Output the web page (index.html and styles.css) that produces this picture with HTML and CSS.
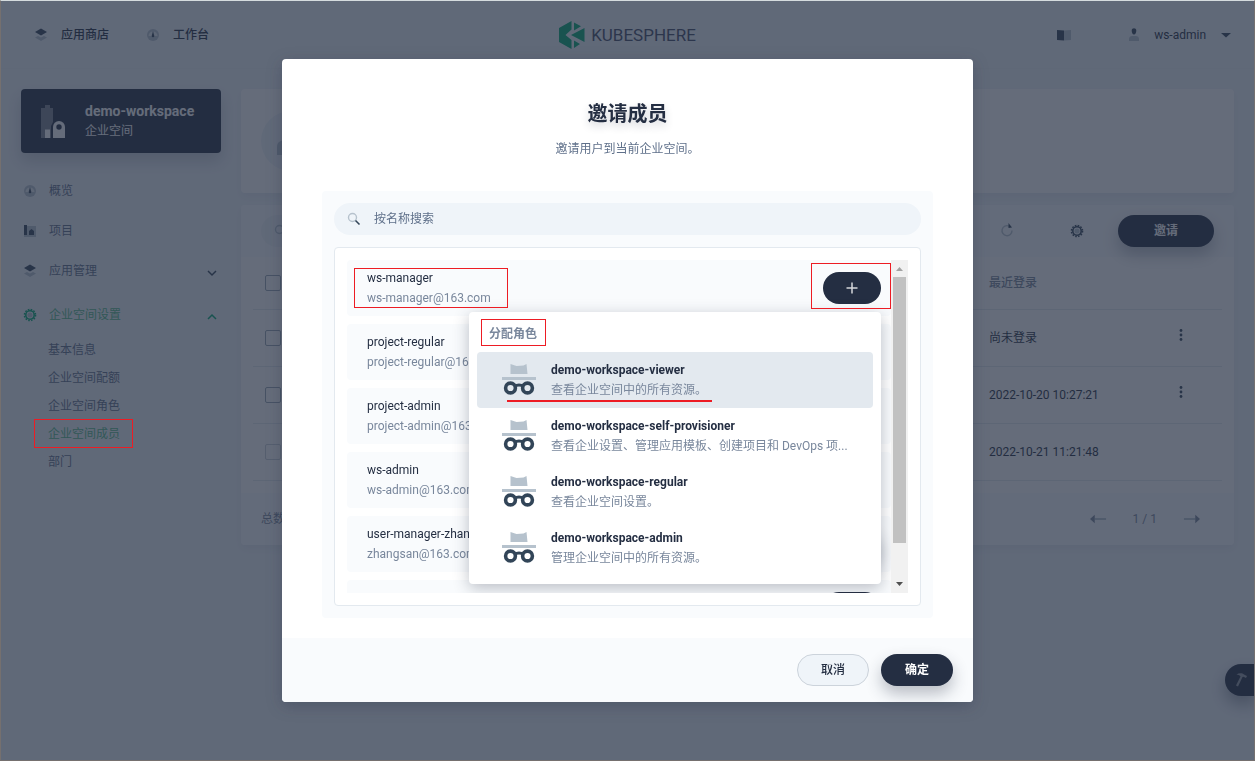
FILE: index.html
```html
<!DOCTYPE html>
<html lang="zh-CN">
<head>
  <meta charset="UTF-8">
  <title>KubeSphere</title>
  <meta name="viewport" content="width=device-width, initial-scale=1.0">
  <link rel="stylesheet" href="styles.css">
</head>
<body>
  <!-- Shared icons -->
  <svg class="sprite" aria-hidden="true">
    <symbol id="i-layers" viewBox="0 0 16 16">
      <path class="light" d="M2 10.500 5 9l3 1.600L11 9l3 1.500L8 14z"/>
      <path class="dark" d="M8 1.500l6 3.500L8 8.500 2 5z"/>
    </symbol>
    <symbol id="i-dash" viewBox="0 0 16 16">
      <circle class="light" cx="8" cy="8" r="6"/>
      <path class="pale" d="M3.500 9a4.500 4.500 0 1 1 9 0z"/>
      <path class="dark" d="M8 4l1.300 5a1.300 1.300 0 1 1-2.600 0z"/>
    </symbol>
    <symbol id="i-project" viewBox="0 0 16 16">
      <path class="light" d="M5 3h9v11H2v-2h3z"/>
      <path class="dark" d="M2 2h3v10H2zM7 8l2.500-2L12 8v4H7z"/>
    </symbol>
    <symbol id="i-gear" viewBox="0 0 16 16">
      <circle class="light" cx="8" cy="8" r="2.600"/>
      <circle class="ring" cx="8" cy="8" r="4.200"/>
      <circle class="teeth" cx="8" cy="8" r="5.500"/>
    </symbol>
    <symbol id="i-search" viewBox="0 0 16 16">
      <circle cx="6.500" cy="6.500" r="4" fill="none" stroke="#b6c2cd" stroke-width="1.400"/>
      <path d="M9.500 9.500l4 4" stroke="#324558" stroke-width="1.600"/>
    </symbol>
    <symbol id="i-plus" viewBox="0 0 16 16">
      <path d="M8 2.500v11M2.500 8h11" stroke="#fff" stroke-width="1.500" opacity=".8"/>
    </symbol>
    <symbol id="i-down" viewBox="0 0 16 16">
      <path d="M4 8l4 4 4-4" fill="none" stroke="currentColor" stroke-width="1.500"/>
    </symbol>
    <symbol id="i-up" viewBox="0 0 16 16">
      <path d="M4 12l4-4 4 4" fill="none" stroke="currentColor" stroke-width="1.500"/>
    </symbol>
    <symbol id="i-more" viewBox="0 0 16 16">
      <circle class="dark" cx="8" cy="3.500" r="1.400"/>
      <circle class="dark" cx="8" cy="8" r="1.400"/>
      <circle class="dark" cx="8" cy="12.500" r="1.400"/>
    </symbol>
    <symbol id="i-role" viewBox="0 0 40 40">
      <path d="M11.500 4l6 2 7-.5L27.500 4l1 10h-17zM3 17h34v3H3z" fill="#b6c2cd"/>
      <circle cx="11.500" cy="28" r="4.900" fill="none" stroke="#324558" stroke-width="3.600"/>
      <circle cx="28.500" cy="28" r="4.900" fill="none" stroke="#324558" stroke-width="3.600"/>
      <path d="M15.500 26.500c2.500-2 6.500-2 9 0" fill="none" stroke="#324558" stroke-width="3"/>
    </symbol>
  </svg>

  <div class="page">
    <header class="header">
      <nav class="header-nav">
        <a href="#"><svg class="icon"><use href="#i-layers"/></svg>应用商店</a>
        <a href="#"><svg class="icon"><use href="#i-dash"/></svg>工作台</a>
      </nav>
      <a href="#" class="logo">
        <svg width="26" height="28" viewBox="0 0 26 28">
          <path d="M0 7L12.500 0v8.500L6.500 14l6 5v9L0 21z"/>
          <path d="M15 1.500l7 3.800-7 4.200zM25.500 7v14L12 14zM15 19.500l6 3.500-6 4z"/>
        </svg>
        KUBESPHERE
      </a>
      <div class="header-user">
        <button type="button" class="plain" aria-label="文档">
          <svg class="icon" viewBox="0 0 16 16"><path class="dark" d="M1 3l7 .5v10L1 13z"/><path class="light" d="M8 3.500L15 3v10l-7 .5z"/></svg>
        </button>
        <button type="button" class="plain account">
          <svg class="icon" viewBox="0 0 16 16"><path class="light" d="M3 14v-2c0-2 1.500-3 3-3h4c1.500 0 3 1 3 3v2z"/><path class="dark" d="M5.700 3.500c0-3 4.600-3 4.600 0 0 2-.8 4-2.300 4s-2.300-2-2.300-4z"/></svg>
          ws-admin
          <svg class="icon" viewBox="0 0 16 16"><path class="dark" d="M3 6h10l-5 4.500z"/></svg>
        </button>
      </div>
    </header>

    <div class="main">
      <aside class="sidebar">
        <button type="button" class="workspace">
          <svg width="40" height="40" viewBox="0 0 40 40">
            <path fill="#fff" opacity=".4" d="M8 7h4V4h5v3h3v14l-2 4v12H8z"/>
            <path fill="#fff" d="M12 28.500h5V37h-5z"/>
            <path fill="#fff" d="M20 37V26a6 6 0 0 1 12 0v11z"/>
            <circle cx="26" cy="26" r="2.700" fill="#242e42"/>
          </svg>
          <span class="workspace-text">
            <strong>demo-workspace</strong>
            <span>企业空间</span>
          </span>
        </button>
        <ul class="menu">
          <li><a href="#"><svg class="icon"><use href="#i-dash"/></svg>概览</a></li>
          <li><a href="#"><svg class="icon"><use href="#i-project"/></svg>项目</a></li>
          <li><a href="#"><svg class="icon"><use href="#i-layers"/></svg>应用管理<svg class="icon arrow"><use href="#i-down"/></svg></a></li>
          <li class="open">
            <a href="#"><svg class="icon"><use href="#i-gear"/></svg>企业空间设置<svg class="icon arrow"><use href="#i-up"/></svg></a>
            <ul class="submenu">
              <li><a href="#">基本信息</a></li>
              <li><a href="#">企业空间配额</a></li>
              <li><a href="#">企业空间角色</a></li>
              <li><a href="#" class="active">企业空间成员<span class="mark mark-menu"></span></a></li>
              <li><a href="#">部门</a></li>
            </ul>
          </li>
        </ul>
      </aside>

      <main class="content">
        <section class="banner">
          <div class="banner-icon">
            <svg width="28" height="28" viewBox="0 0 28 28"><path fill="#b6c2cd" d="M0 32V20c0-5 4-7 8-7h12c4 0 8 2 8 7v8H0z"/></svg>
          </div>
        </section>
        <section class="panel">
          <div class="toolbar">
            <div class="toolbar-search">
              <svg class="icon"><use href="#i-search"/></svg>
              <input type="search" aria-label="搜索成员">
            </div>
            <button type="button" class="plain tool" aria-label="刷新">
              <svg class="icon" viewBox="0 0 16 16"><path d="M10 3.100a5 5 0 1 0 3 4.500" fill="none" stroke="#b6c2cd" stroke-width="1.400"/><path class="dark" d="M9.500 0v5l3.500-.5z"/></svg>
            </button>
            <button type="button" class="plain tool" aria-label="设置">
              <svg class="icon"><use href="#i-gear"/></svg>
            </button>
            <button type="button" class="btn btn-dark btn-wide">邀请</button>
          </div>
          <div class="table-wrap">
            <table>
              <thead>
                <tr>
                  <th class="col-check"><input type="checkbox" aria-label="全选"></th>
                  <th></th>
                  <th class="col-login">最近登录</th>
                  <th class="col-more"></th>
                </tr>
              </thead>
              <tbody>
                <tr>
                  <td><input type="checkbox" aria-label="选择"></td>
                  <td></td>
                  <td>尚未登录</td>
                  <td class="col-more"><button type="button" class="plain" aria-label="更多"><svg class="icon"><use href="#i-more"/></svg></button></td>
                </tr>
                <tr>
                  <td><input type="checkbox" aria-label="选择"></td>
                  <td></td>
                  <td>2022-10-20 10:27:21</td>
                  <td class="col-more"><button type="button" class="plain" aria-label="更多"><svg class="icon"><use href="#i-more"/></svg></button></td>
                </tr>
                <tr>
                  <td><input type="checkbox" aria-label="选择" disabled></td>
                  <td></td>
                  <td>2022-10-21 11:21:48</td>
                  <td class="col-more"></td>
                </tr>
              </tbody>
            </table>
          </div>
          <div class="panel-footer">
            <span>总数</span>
            <div class="pager">
              <button type="button" class="plain" aria-label="上一页"><svg class="page-arrow" viewBox="0 0 18 10"><path d="M5 5h12" stroke="#b6c2cd" stroke-width="2"/><path fill="#79879c" d="M0 5l5-4.500v9z"/></svg></button>
              <span>1 / 1</span>
              <button type="button" class="plain" aria-label="下一页"><svg class="page-arrow" viewBox="0 0 18 10"><path d="M1 5h12" stroke="#b6c2cd" stroke-width="2"/><path fill="#79879c" d="M18 5l-5-4.500v9z"/></svg></button>
            </div>
          </div>
        </section>
      </main>
    </div>

    <button type="button" class="toolbox" aria-label="工具箱">
      <svg class="icon" viewBox="0 0 16 16"><path fill="#fff" opacity=".5" d="M3.500 2.500C6 .8 9.500 1 11 2.500l3 1.500-1 2-2.500-1.200-1 .2L5 14.500l-2-1L7.500 4.500C6.500 3 5 2.800 3.500 2.500z"/></svg>
    </button>
  </div>

  <div class="overlay">
    <div class="modal" role="dialog" aria-labelledby="modal-title">
      <div class="modal-body">
        <h2 id="modal-title">邀请成员</h2>
        <p class="modal-desc">邀请用户到当前企业空间。</p>
        <div class="picker">
          <div class="search">
            <svg class="icon"><use href="#i-search"/></svg>
            <input type="search" placeholder="按名称搜索" aria-label="按名称搜索">
          </div>
          <div class="list-box">
            <ul class="users">
              <li class="user">
                <div class="user-info">
                  <strong>ws-manager</strong>
                  <span>ws-manager@163.com</span>
                  <span class="mark mark-user"></span>
                </div>
                <div class="user-add">
                  <button type="button" class="btn btn-add" aria-label="添加 ws-manager"><svg class="icon"><use href="#i-plus"/></svg></button>
                  <span class="mark mark-add"></span>
                  <div class="roles">
                    <div class="roles-title">分配角色<span class="mark mark-title"></span></div>
                    <button type="button" class="role selected">
                      <svg class="role-icon"><use href="#i-role"/></svg>
                      <span class="role-text"><strong>demo-workspace-viewer</strong><span>查看企业空间中的所有资源。</span></span>
                      <span class="underline"></span>
                    </button>
                    <button type="button" class="role">
                      <svg class="role-icon"><use href="#i-role"/></svg>
                      <span class="role-text"><strong>demo-workspace-self-provisioner</strong><span>查看企业设置、管理应用模板、创建项目和 DevOps 项...</span></span>
                    </button>
                    <button type="button" class="role">
                      <svg class="role-icon"><use href="#i-role"/></svg>
                      <span class="role-text"><strong>demo-workspace-regular</strong><span>查看企业空间设置。</span></span>
                    </button>
                    <button type="button" class="role">
                      <svg class="role-icon"><use href="#i-role"/></svg>
                      <span class="role-text"><strong>demo-workspace-admin</strong><span>管理企业空间中的所有资源。</span></span>
                    </button>
                  </div>
                </div>
              </li>
              <li class="user">
                <div class="user-info"><strong>project-regular</strong><span>project-regular@163.com</span></div>
                <button type="button" class="btn btn-add" aria-label="添加 project-regular"></button>
              </li>
              <li class="user">
                <div class="user-info"><strong>project-admin</strong><span>project-admin@163.com</span></div>
                <button type="button" class="btn btn-add" aria-label="添加 project-admin"></button>
              </li>
              <li class="user">
                <div class="user-info"><strong>ws-admin</strong><span>ws-admin@163.com</span></div>
                <button type="button" class="btn btn-add" aria-label="添加 ws-admin"></button>
              </li>
              <li class="user">
                <div class="user-info"><strong>user-manager-zhangsan</strong><span>zhangsan@163.com</span></div>
                <button type="button" class="btn btn-dark btn-add" aria-label="添加 user-manager-zhangsan"></button>
              </li>
              <li class="user">
                <div class="user-info"></div>
                <button type="button" class="btn btn-add" aria-label="添加"></button>
              </li>
            </ul>
            <div class="scrollbar">
              <svg width="17" height="17" viewBox="0 0 17 17"><path fill="#a3a3a3" d="M5 11h7L8.500 7z"/></svg>
              <div class="track"><div class="thumb"></div></div>
              <svg width="17" height="17" viewBox="0 0 17 17"><path fill="#505050" d="M5 6h7l-3.500 4z"/></svg>
            </div>
          </div>
        </div>
      </div>
      <div class="modal-footer">
        <button type="button" class="btn btn-light">取消</button>
        <button type="button" class="btn btn-dark">确定</button>
      </div>
    </div>
  </div>
</body>
</html>
```
FILE: styles.css
```css
* {
  box-sizing: border-box;
}
body {
  margin: 0;
  height: 100vh;
  overflow: hidden;
  background-color: #eff4f9;
  color: #242e42;
  font-family: Roboto, "Noto Sans CJK SC", sans-serif;
  font-size: 12px;
  line-height: 20px;
}
a {
  color: inherit;
  text-decoration: none;
}
ul {
  list-style: none;
  margin: 0;
  padding: 0;
}
button,
input {
  font: inherit;
  color: inherit;
}
.plain {
  border: 0;
  padding: 0;
  background: none;
  cursor: pointer;
}
.sprite {
  position: absolute;
  width: 0;
  height: 0;
}
.icon {
  display: block;
  flex: none;
  width: 16px;
  height: 16px;
}
.dark {
  fill: #324558;
}
.light {
  fill: #b6c2cd;
}
.pale {
  fill: #e3e9ef;
}
.ring,
.teeth {
  fill: none;
  stroke: var(--gear, #324558);
  stroke-width: 1.6;
}
.teeth {
  stroke-dasharray: 1.6 1.28;
}

/* header */
.header {
  display: flex;
  align-items: center;
  height: 69px;
  padding: 1px 21px 0;
  border-bottom: 1px solid #ebf0f5;
}
.header-nav,
.header-user {
  display: flex;
  flex: 1;
}
.header-nav {
  gap: 36px;
}
.header-nav a {
  display: flex;
  align-items: center;
  gap: 12px;
  font-weight: 500;
}
.header-nav a:first-child {
  margin-left: 12px;
}
.logo {
  display: flex;
  align-items: center;
  gap: 6px;
  color: #424a66;
  font-size: 17px;
}
.logo svg {
  fill: #00aa72;
}
.header-user {
  justify-content: flex-end;
  gap: 54px;
}
.account {
  display: flex;
  align-items: center;
  gap: 12px;
}

/* sidebar */
.main {
  display: flex;
  gap: 20px;
  padding: 20px 21px;
}
.sidebar {
  flex: none;
  width: 200px;
}
.workspace {
  display: flex;
  align-items: center;
  gap: 12px;
  width: 100%;
  height: 64px;
  padding: 0 12px;
  border: 0;
  border-radius: 4px;
  background-color: #242e42;
  box-shadow: 0 8px 16px rgba(36, 46, 66, 0.2);
  color: #fff;
  text-align: left;
}
.workspace-text strong,
.workspace-text span {
  display: block;
}
.workspace-text strong {
  font-size: 14px;
}
.menu {
  padding-top: 18px;
  color: #5f708a;
}
.menu > li > a {
  display: flex;
  align-items: center;
  gap: 11px;
  height: 40px;
  padding: 0 1px;
}
.menu > .open {
  padding-top: 4px;
}
.menu > .open > a {
  color: #55bc8a;
}
.open .icon {
  --gear: #00aa72;
  color: #00aa72;
}
.arrow {
  margin-left: auto;
  color: #324558;
}
.submenu a {
  display: inline-block;
  position: relative;
  height: 28px;
  padding: 5px 0 0 27px;
}
.submenu .active {
  color: #55bc8a;
}

/* content */
.content {
  flex: 1;
  min-width: 0;
}
.banner,
.panel {
  border-radius: 4px;
  background-color: #fff;
  box-shadow: 0 4px 8px rgba(36, 46, 66, 0.06);
}
.banner {
  height: 104px;
  margin-bottom: 12px;
  padding: 22px 20px;
}
.banner-icon {
  display: flex;
  align-items: center;
  justify-content: center;
  width: 60px;
  height: 60px;
  border-radius: 50%;
  background-color: #eff4f9;
}
.toolbar {
  display: flex;
  align-items: center;
  gap: 12px;
  height: 52px;
  padding: 0 20px;
  border-radius: 4px 4px 0 0;
  background-color: #f9fbfd;
}
.toolbar-search,
.search {
  display: flex;
  align-items: center;
  gap: 12px;
  height: 32px;
  padding: 0 12px;
  border-radius: 16px;
  background-color: #eff4f9;
}
.toolbar-search {
  flex: 1;
}
.toolbar-search input,
.search input {
  flex: 1;
  min-width: 0;
  border: 0;
  padding: 0;
  background: none;
  outline: none;
}
.tool {
  display: flex;
  justify-content: center;
  width: 58px;
}
.table-wrap {
  padding: 0 12px 12px;
}
table {
  width: 100%;
  border-collapse: collapse;
  table-layout: fixed;
}
th,
td {
  height: 57px;
  padding: 0 12px;
  border-bottom: 1px solid #e3e9ef;
  text-align: left;
}
th {
  height: 52px;
  color: #79879c;
  font-weight: 500;
}
.col-check {
  width: 60px;
}
.col-login {
  width: 163px;
}
.col-more {
  width: 82px;
}
.col-more .icon {
  margin: 0 21px;
}
input[type="checkbox"] {
  display: block;
  appearance: none;
  width: 16px;
  height: 16px;
  margin: 0;
  border: 1px solid #9aa7b6;
  border-radius: 2px;
}
input[type="checkbox"]:disabled {
  opacity: 0.5;
}
.panel-footer {
  display: flex;
  align-items: center;
  justify-content: space-between;
  height: 52px;
  padding: 0 34px 0 20px;
  border-radius: 0 0 4px 4px;
  background-color: #f9fbfd;
  color: #79879c;
}
.pager {
  display: flex;
  align-items: center;
  gap: 26px;
}
.page-arrow {
  display: block;
  width: 17px;
  height: 10px;
}
.toolbox {
  position: fixed;
  right: 0;
  bottom: 65px;
  width: 30px;
  height: 32px;
  padding: 0 8px;
  border: 0;
  border-radius: 16px 0 0 16px;
  background-color: #242e42;
  box-shadow: 0 8px 16px rgba(36, 46, 66, 0.4);
}

/* buttons */
.btn {
  display: flex;
  align-items: center;
  justify-content: center;
  width: 72px;
  height: 32px;
  padding: 0;
  border: 0;
  border-radius: 16px;
  background-color: #242e42;
  color: #fff;
  font-weight: 700;
  cursor: pointer;
}
.btn-dark {
  box-shadow: 0 8px 16px rgba(36, 46, 66, 0.3);
}
.btn-light {
  border: 1px solid #ccd3db;
  background-color: #eff4f9;
  color: #242e42;
  font-weight: 500;
}
.btn-wide {
  width: 96px;
}
.btn-add {
  width: 58px;
}

/* modal */
.overlay {
  display: flex;
  align-items: center;
  justify-content: center;
  position: fixed;
  inset: 0;
  z-index: 10;
  border: 1px solid #75706f;
  border-top-color: #d5dcde;
  background-color: rgba(35, 45, 65, 0.7);
}
.modal {
  width: 691px;
  max-width: 100%;
  border-radius: 4px;
  background-color: #fff;
  box-shadow: 0 4px 16px rgba(36, 46, 66, 0.3);
}
.modal-body {
  padding: 41px 40px 20px;
}
.modal-body h2 {
  margin: 0 0 11px;
  font-size: 20px;
  line-height: 28px;
  text-align: center;
  text-shadow: 0 4px 8px rgba(36, 46, 66, 0.2);
}
.modal-desc {
  margin: 0 0 32px;
  color: #5f708a;
  text-align: center;
}
.picker {
  padding: 12px;
  border-radius: 4px;
  background-color: #f9fbfd;
}
.search input::placeholder {
  color: #5f708a;
}
.list-box {
  display: flex;
  height: 359px;
  margin-top: 12px;
  padding: 12px;
  border: 1px solid #e3e9ef;
  border-radius: 4px;
  background-color: #fff;
}
.users {
  flex: 1;
  overflow: hidden;
}
.user {
  display: flex;
  align-items: center;
  justify-content: space-between;
  height: 56px;
  margin-bottom: 8px;
  padding: 0 10px 0 20px;
  border-radius: 4px;
  background-color: #f9fbfd;
}
.user-info {
  position: relative;
}
.user-info strong,
.user-info span {
  display: block;
  font-weight: 400;
}
.user-info span {
  color: #79879c;
}
.user-add {
  position: relative;
}
.scrollbar {
  display: flex;
  flex-direction: column;
  flex: none;
  width: 17px;
  background-color: #f1f1f1;
}
.track {
  flex: 1;
  padding: 0 2px;
}
.thumb {
  height: 89%;
  background-color: #c1c1c1;
}

/* role menu */
.roles {
  position: absolute;
  top: 40px;
  right: 0;
  z-index: 1;
  width: 412px;
  padding: 8px;
  border-radius: 4px;
  background-color: #fff;
  box-shadow: 0 4px 16px rgba(36, 46, 66, 0.3);
}
.roles-title {
  position: relative;
  height: 32px;
  padding: 4px 12px;
  color: #79879c;
  font-weight: 700;
}
.role {
  display: flex;
  align-items: center;
  gap: 12px;
  position: relative;
  width: 100%;
  height: 56px;
  padding: 0 22px;
  border: 0;
  border-radius: 4px;
  background: none;
  text-align: left;
  cursor: pointer;
}
.role.selected {
  background-color: #e3e9ef;
}
.role-icon {
  flex: none;
  width: 40px;
  height: 40px;
}
.role-text {
  min-width: 0;
}
.role-text strong,
.role-text span {
  display: block;
  white-space: nowrap;
}
.role-text span {
  color: #79879c;
}
.modal-footer {
  display: flex;
  justify-content: flex-end;
  gap: 12px;
  padding: 16px 20px;
  border-radius: 0 0 4px 4px;
  background-color: #f9fbfd;
}

/* red marks */
.mark {
  position: absolute;
  z-index: 20;
  border: 1px solid #ed1c24;
}
.mark-menu {
  top: 0;
  left: 13px;
  width: 99px;
  height: 29px;
}
.mark-user {
  top: 0;
  left: -13px;
  width: 154px;
  height: 40px;
}
.mark-add {
  top: -9px;
  right: -10px;
  width: 80px;
  height: 46px;
}
.mark-title {
  top: -1px;
  left: 4px;
  width: 65px;
  height: 27px;
}
.underline {
  position: absolute;
  bottom: 6px;
  left: 30px;
  width: 205px;
  height: 2px;
  background-color: #ed1c24;
}
```
